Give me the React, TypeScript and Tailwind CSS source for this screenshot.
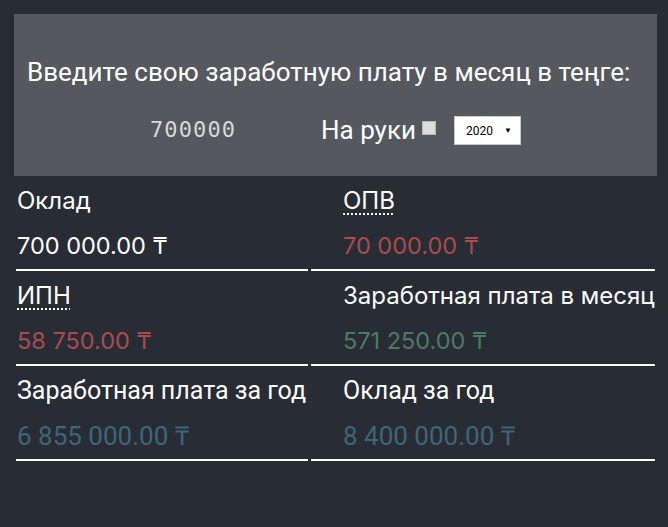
export default function App() {
  const rubik = "font-['Inter','Noto_Sans',sans-serif]";
  const roboto = "font-['Roboto','Liberation_Sans',sans-serif]";

  return (
    <div className="w-full min-h-[527px] bg-[#282c34] px-[14px] pt-[14px] pb-8 text-white">
      {/* Input panel */}
      <section className={`${roboto} h-[162px] w-[643px] bg-[#55585f] flex flex-col`}>
        <h1 className="pt-[44px] pl-[13px] text-[26px] leading-[28px] font-normal">
          Введите свою заработную плату в месяц в теңге:
        </h1>
        <div className="mt-[28px] flex items-center justify-center">
          <input
            readOnly
            value="700000"
            className="w-[90px] bg-transparent p-0 text-[22px] leading-[28px] text-[#d8d8d8] tracking-[1.1px] outline-none font-['DejaVu_Sans_Mono','Liberation_Mono',monospace]"
          />
          <span className="ml-[81px] text-[26px] leading-[28px]">На руки</span>
          <span className="ml-[6px] mb-[4px] h-[14px] w-[14px] border border-[#b8b8b8] bg-[#dcdcdc]" />
          <div className="ml-[18px] mt-[2px] flex h-[29px] w-[67px] items-center justify-between border border-[#c8c8c8] bg-white pl-[11px] pr-[8px] text-black">
            <span className="text-[12px] font-['Liberation_Sans_Narrow','Roboto',sans-serif]">2020</span>
            <span className="text-[8px]">▼</span>
          </div>
        </div>
      </section>

      {/* Results */}
      <div className="ml-[2px] grid grid-cols-[292px_344px] gap-x-[3px]">
        <Cell label="Оклад" value="700 000.00 ₸" color="text-white" font={rubik} />
        <Cell label="ОПВ" value="70 000.00 ₸" color="text-[#a94b4f]" font={rubik} abbr right />
        <Cell label="ИПН" value="58 750.00 ₸" color="text-[#a94b4f]" font={rubik} abbr />
        <Cell label="Заработная плата в месяц" value="571 250.00 ₸" color="text-[#4e7a63]" font={rubik} right />
        <Cell label="Заработная плата за год" value="6 855 000.00 ₸" color="text-[#3e6578]" font={roboto} big />
        <Cell label="Оклад за год" value="8 400 000.00 ₸" color="text-[#3e6578]" font={roboto} big right />
      </div>
    </div>
  );
}

function Cell({
  label,
  value,
  color,
  font,
  abbr,
  right,
  big,
}: {
  label: string;
  value: string;
  color: string;
  font: string;
  abbr?: boolean;
  right?: boolean;
  big?: boolean;
}) {
  return (
    <div className={`${font} border-b-2 border-white pt-[10px] pb-[8px] ${right ? "pl-[32px]" : "pl-px"}`}>
      <div className={`${big ? "text-[25px]" : "text-[24px]"} leading-[30px] whitespace-nowrap`}>
        {abbr ? (
          <span className="underline decoration-dotted decoration-2 underline-offset-[4px]">{label}</span>
        ) : (
          label
        )}
      </div>
      <div className={`mt-[15px] ${big ? "text-[26px]" : "text-[23.5px]"} leading-[30px] whitespace-nowrap ${color}`}>
        {value}
      </div>
    </div>
  );
}
